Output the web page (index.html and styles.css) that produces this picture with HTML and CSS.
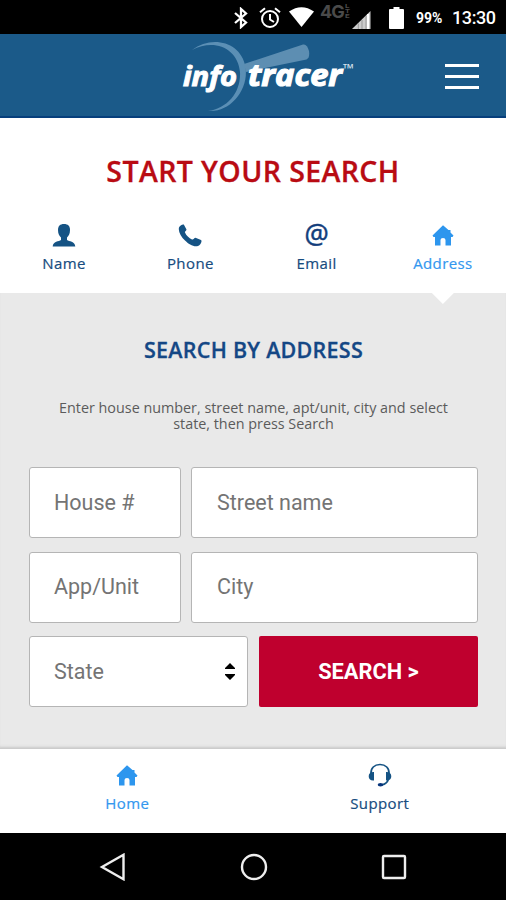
FILE: index.html
```html
<!DOCTYPE html>
<html lang="en">
<head>
<meta charset="utf-8">
<title>InfoTracer</title>
<link rel="stylesheet" href="styles.css">
</head>
<body>
<div class="status">
  <svg class="bt" width="14" height="22" viewBox="0 0 14 22"><path d="M1 6l11 9.500-5 4.500V2l5 4.500L1 16" fill="none" stroke="#fff" stroke-width="2.300"/></svg>
  <svg class="alarm" width="22" height="22" viewBox="0 0 22 22" fill="none" stroke="#fff" stroke-width="2"><circle cx="11" cy="12" r="8"/><path d="M11 7v5.500l4 2.500M1 5.300L6 1.200M21 5.300L16 1.200"/></svg>
  <svg class="wifi" width="25" height="20" viewBox="0 0 25 20"><path d="M0 4.500Q12.500-4 25 4.500L12.500 20z" fill="#fff"/></svg>
  <span class="net">4G</span><span class="lte"><i>L</i><i>T</i><i>E</i></span>
  <svg class="signal" width="19" height="18" viewBox="0 0 19 18"><path d="M0 18L18.500 0v18z" fill="#ccc"/><path d="M16 3v15" stroke="#fff" stroke-width="2"/><path d="M6.300 12.500V18M10 9v9M14 5v13" stroke="#999" stroke-width="1"/></svg>
  <svg class="battery" width="15" height="22" viewBox="0 0 15 22"><path d="M4.500 0h6v2H14q1 0 1 1v18q0 1-1 1H1q-1 0-1-1V3q0-1 1-1h3.500z" fill="#fff"/></svg>
  <span class="pct">99%</span>
  <span class="time">13:30</span>
</div>

<header class="header">
  <svg class="logo" width="180" height="76" viewBox="178 38 180 76">
    <path d="M192 50C211 35 241 41 245.500 67C249 90 230 113 208 111C228 108 241 92 240 72C238 48 214 38 192 50z" fill="#5b8fb5"/>
    <path d="M244 64L303 44.500Q307 43.500 309 51Q310 58 306.500 59.500L246 72z" fill="#5d8eb2"/>
    <g fill="#fff" stroke="#fff" font-family="Open Sans, sans-serif" font-style="italic">
      <text x="183" y="86" font-size="26.500" font-weight="700" stroke-width="1" textLength="54" lengthAdjust="spacingAndGlyphs">info</text>
      <text x="248" y="86" font-size="30" font-weight="700" stroke-width="1.200" textLength="94" lengthAdjust="spacingAndGlyphs">tracer</text>
    </g>
    <text x="343" y="73" font-size="13" font-weight="700" font-family="Open Sans, sans-serif" fill="#d5e2ec" textLength="11" lengthAdjust="spacingAndGlyphs">™</text>
  </svg>
  <div class="menu"><span></span><span></span><span></span></div>
</header>

<section class="start">
  <h1>START YOUR SEARCH</h1>
  <nav class="tabs">
    <a class="tab"><svg width="24" height="24" viewBox="0 0 24 24"><path d="M12 1C8 1 6 3 6 7c0 4 1.500 6 3 7.500v2.500C7 18.700 1 18 .7 23.500h22.600C23 18 17 18.700 15 17v-2.500C16.500 13 18 11 18 7c0-4-2-6-6-6z" fill="#155384"/></svg><span>Name</span></a>
    <a class="tab"><svg width="24" height="24" viewBox="0 0 24 24"><path d="M1 4.500C1.500 2.500 4.500 1 5.800 1.500L8.500 6.500C8.500 8 6.500 8.500 7 9.500c1.200 3 4 5.500 7 7 1.500.5 2-1.500 3.500-1.700l5.500 2.200c1.500 1-.5 5-3 6-4 1.500-9.500-2-13-5.500C3 13.500 0 8.500 1 4.500z" fill="#155384"/></svg><span>Phone</span></a>
    <a class="tab"><b class="at">@</b><span>Email</span></a>
    <a class="tab active"><svg width="24" height="24" viewBox="0 0 24 24"><path d="M12 2.300L1.500 12.500 2.500 14H4v8.500h5.500V17q0-2 2.500-2t2.500 2v5.500H20V14h1.500l1-1.500-3-3V7h-2z" fill="#2d96ee"/></svg><span>Address</span><em class="pointer"></em></a>
  </nav>
</section>

<main class="search">
  <h2>SEARCH BY ADDRESS</h2>
  <p>Enter house number, street name, apt/unit, city and select state, then press Search</p>
  <form class="form">
    <div class="row split"><div class="field house">House #</div><div class="field street">Street name</div></div>
    <div class="row split"><div class="field app">App/Unit</div><div class="field city">City</div></div>
    <div class="row half">
      <div class="field select"><span class="state">State</span><svg width="10" height="17" viewBox="0 0 10 17"><path d="M5 0l5 5v1H0V5zM5 17l5-5v-1H0v1z"/></svg></div>
      <button type="button" class="go">SEARCH &gt;</button>
    </div>
  </form>
</main>

<nav class="bottom">
  <a class="tab active"><svg width="24" height="24" viewBox="0 0 24 24"><path d="M12 2.300L1.500 12.500 2.500 14H4v8.500h5.500V17q0-2 2.500-2t2.500 2v5.500H20V14h1.500l1-1.500-3-3V7h-2z" fill="#2d96ee"/></svg><span class="home">Home</span></a>
  <a class="tab"><svg width="24" height="24" viewBox="0 0 24 24"><path d="M3 11C2.500 5 6.500 1.500 12 1.500S21.500 5 21 11M20.500 16q-1.500 5-6.500 5.800" fill="none" stroke="#155384" stroke-width="1.700"/><path d="M6 9v8.500C2.500 18 .7 16 .7 13.300S2.500 8.700 6 9zM18 9v8.500c3.500.5 5.300-1.500 5.300-4.200S21.500 8.700 18 9z" fill="#155384"/><ellipse cx="12.500" cy="21.700" rx="2.800" ry="1.800" fill="#06347b"/></svg><span class="support">Support</span></a>
</nav>

<footer class="android">
  <svg width="28" height="28" viewBox="0 0 28 28"><path d="M24.500 1.800v24.400L3 14z"/></svg>
  <svg width="28" height="28" viewBox="0 0 28 28"><circle cx="14" cy="14" r="12"/></svg>
  <svg width="28" height="28" viewBox="0 0 28 28"><rect x="3" y="3" width="22" height="22" rx="1"/></svg>
</footer>
</body>
</html>
```
FILE: styles.css
```css
* { box-sizing: border-box; }
body { margin: 0; width: 506px; height: 900px; overflow: hidden; background: #fff; font-family: "Open Sans", sans-serif; color: #144b80; }
h1, h2, p { margin: 0; }
svg { display: block; flex: none; }

.status { display: flex; height: 34px; padding: 7px 0 0 234px; background: #000; color: #fff; font-family: Roboto, sans-serif; white-space: nowrap; }
.alarm { margin-left: 11px; }
.wifi { margin-left: 8px; }
.net { width: 23px; margin: -5px 0 0 6px; font: 700 18px/20px Inter, sans-serif; letter-spacing: -1px; color: #4a4a4a; }
.lte { display: flex; flex-direction: column; width: 7px; margin: -3px 0 0 2px; font: 700 5px/5px Roboto, sans-serif; color: #4a4a4a; }
.lte i { font-style: normal; height: 5px; transform: scaleX(1.6); transform-origin: 0 0; }
.signal { margin: 4px 0 0 0; }
.battery { margin-left: 18px; }
.pct { width: 37px; margin-left: 12px; font-size: 14px; font-weight: 700; line-height: 22px; }
.time { margin-left: -1px; font-size: 18px; font-weight: 500; line-height: 22px; letter-spacing: -.4px; }

.header { display: flex; justify-content: space-between; height: 84px; padding: 4px 27px 0 178px; background: #1b5a89; border-bottom: 2px solid #073f7c; }
.menu { display: flex; flex-direction: column; gap: 8px; padding-top: 26px; }
.menu span { width: 34px; height: 3px; background: #fff; }

.start { height: 175px; }
h1 { padding-top: 33px; text-align: center; font-size: 28.500px; line-height: 40px; font-weight: 600; letter-spacing: .4px; -webkit-text-stroke: .3px; color: #b90b13; white-space: nowrap; }
.tabs { display: grid; grid-template-columns: repeat(4, 1fr); height: 102px; padding: 32px 0 0 1px; }
.tab { position: relative; display: flex; flex-direction: column; align-items: center; font-size: 15px; line-height: 20px; font-weight: 500; letter-spacing: .4px; -webkit-text-stroke: .2px; color: #174c80; }
.tab > span { margin-top: 6px; }
.active { color: #3397ef; }
.at { height: 24px; font-size: 27px; line-height: 22px; font-weight: 500; letter-spacing: 0; color: #123d7b; -webkit-text-stroke: .5px; }
.pointer { position: absolute; left: calc(50% - 11px); top: 70px; width: 22px; height: 11px; background: #fff; clip-path: polygon(0 0, 100% 0, 50% 100%); }

.search { height: 456px; padding: 41px 28px 0 29px; background: #e9e9e9; box-shadow: inset 0 -4px 3px -2px #c8c8c8; }
h2 { text-align: center; font-size: 21.500px; line-height: 32px; font-weight: 600; letter-spacing: .25px; -webkit-text-stroke: .3px; color: #144785; white-space: nowrap; }
p { padding: 34px 20px 0; text-align: center; font-size: 14.350px; line-height: 16px; color: #5b5b5b; }
.form { display: grid; gap: 13.500px; margin-top: 35px; }
.row { display: grid; height: 71px; }
.split { grid-template-columns: 152px 1fr; column-gap: 10px; }
.half { grid-template-columns: 219px 1fr; column-gap: 11px; }
.field { display: flex; align-items: center; padding: 0 12px 0 24px; border: 1.500px solid #b5b5b5; border-radius: 3px; background: #fff; font: 400 21.500px/30px Roboto, sans-serif; color: #747474; white-space: nowrap; }
.street, .city { padding-left: 25px; }
.select { justify-content: space-between; }
.go { border: 0; border-radius: 2px; background: #bf002e; color: #fff; font: 700 21.800px/30px Roboto, sans-serif; }

.bottom { display: grid; grid-template-columns: 1fr 1fr; height: 84px; padding: 14px 0 0 1px; }
.android { display: flex; justify-content: space-between; height: 67px; padding: 20px 98px 0 99px; background: #000; }
.android svg { fill: none; stroke: #eee; stroke-width: 2.400; }
```
